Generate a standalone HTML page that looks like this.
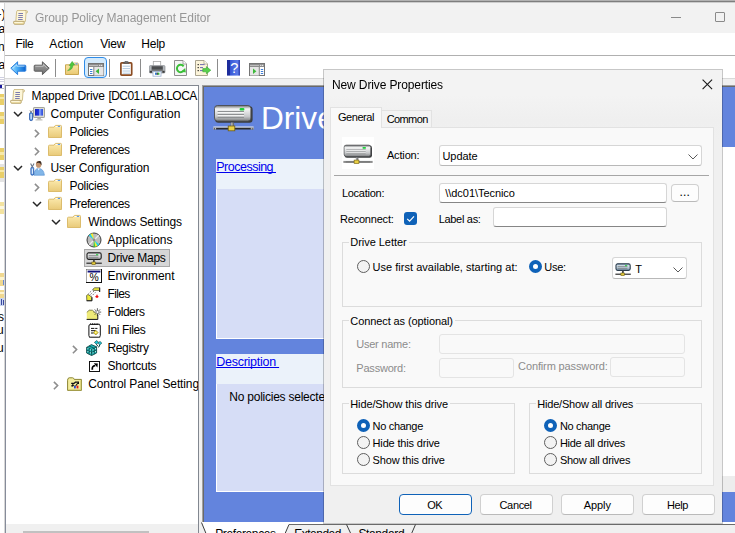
<!DOCTYPE html>
<html>
<head>
<meta charset="utf-8">
<title>Group Policy Management Editor</title>
<style>
html,body{margin:0;padding:0;}
body{width:735px;height:533px;overflow:hidden;position:relative;background:#fff;font-family:"Liberation Sans",sans-serif;font-size:12px;color:#000;}
.abs{position:absolute;}
.t{position:absolute;white-space:nowrap;line-height:1;}
.dis{color:#8c8c8c;}
.inp{position:absolute;background:#fff;border:1px solid #d6d6d6;border-bottom-color:#868686;border-radius:3px;box-sizing:border-box;}
.cmb{border-bottom-color:#b8b8b8;}
.inpd{position:absolute;background:#f9f9f9;border:1px solid #e4e4e4;border-radius:3px;box-sizing:border-box;}
.grp{position:absolute;border:1px solid #dcdcdc;box-sizing:border-box;}
.btn{position:absolute;box-sizing:border-box;border:1px solid #d0d0d0;border-bottom-color:#bababa;border-radius:4px;background:#fdfdfd;}
.rad{position:absolute;width:13px;height:13px;box-sizing:border-box;border:1px solid #5f5f5f;border-radius:50%;background:#f3f3f3;}
.rad.on{border:4px solid #0f62b8;background:#fff;}

</style>
</head>
<body>
<div class="abs" style="left:0px;top:0px;width:735px;height:1px;background:#b2b2b2;"></div>
<div class="abs" style="left:0px;top:1px;width:735px;height:1px;background:#7e7e7e;"></div>
<div class="t" style="left:-2.5px;top:8px;font-size:12px;">-)</div>
<div class="t" style="left:-1.5px;top:23px;font-size:12px;">a</div>
<div class="t" style="left:-2px;top:41px;font-size:12px;">n</div>
<div class="t" style="left:-1.5px;top:59px;font-size:12px;">a</div>
<div class="abs" style="left:0px;top:77px;width:5px;height:1px;background:#cfcfe0;"></div>
<div class="abs" style="left:0px;top:79px;width:5px;height:1px;background:#cfcfe0;"></div>
<div class="abs" style="left:0px;top:81px;width:5px;height:1px;background:#cfcfe0;"></div>
<div class="abs" style="left:0px;top:84px;width:5px;height:5px;background:#fff;border:1px solid #b8b8c8;box-sizing:border-box;"></div>
<div class="abs" style="left:0px;top:85px;width:2px;height:3px;background:#1a1a9a;"></div>
<div class="abs" style="left:0px;top:94px;width:5px;height:11px;background:#e9cf6a;"></div>
<div class="abs" style="left:0px;top:97px;width:5px;height:2px;background:#f7e9a8;"></div>
<div class="abs" style="left:0px;top:112px;width:5px;height:12px;background:#e9cf6a;"></div>
<div class="abs" style="left:0px;top:116px;width:5px;height:3px;background:#f7e9a8;"></div>
<div class="abs" style="left:0px;top:148px;width:5px;height:12px;background:#e9cf6a;"></div>
<div class="abs" style="left:0px;top:152px;width:5px;height:3px;background:#f7e9a8;"></div>
<div class="abs" style="left:0px;top:164px;width:5px;height:18px;background:#e4e4e4;"></div>
<div class="abs" style="left:0px;top:167px;width:5px;height:11px;background:#e9cf6a;"></div>
<div class="abs" style="left:0px;top:170px;width:5px;height:2px;background:#f7e9a8;"></div>
<div class="abs" style="left:0px;top:202px;width:5px;height:12px;background:#f3e3a0;"></div>
<div class="abs" style="left:0px;top:206px;width:5px;height:3px;background:#fdf8e0;"></div>
<div class="abs" style="left:0px;top:273px;width:5px;height:13px;background:#f0d890;"></div>
<div class="abs" style="left:0px;top:277px;width:5px;height:3px;background:#fdf4d0;"></div>
<div class="abs" style="left:3px;top:280px;width:2px;height:5px;background:#6a8ad0;"></div>
<div class="abs" style="left:0px;top:290px;width:5px;height:8px;background:#f0d890;"></div>
<div class="abs" style="left:0px;top:292px;width:5px;height:2px;background:#fdf4d0;"></div>
<div class="abs" style="left:0px;top:298px;width:5px;height:8px;background:#c8d4f0;"></div>
<div class="abs" style="left:1px;top:299px;width:1px;height:6px;background:#3a4aa0;"></div>
<div class="abs" style="left:3px;top:300px;width:1px;height:5px;background:#3a4aa0;"></div>
<div class="t" style="left:-2px;top:311px;font-size:12px;">s</div>
<div class="t" style="left:-3px;top:324px;font-size:12px;">u</div>
<div class="t" style="left:-3px;top:342px;font-size:12px;">u</div>
<div class="abs" style="left:4px;top:2px;width:731px;height:531px;background:#f0f0f0;"></div>
<div class="abs" style="left:4px;top:2px;width:1px;height:531px;background:#d6d6d6;"></div>
<div class="abs" style="left:5px;top:2px;width:730px;height:31px;background:#f2f2f2;"></div>
<div class="abs" style="left:0px;top:2px;width:735px;height:1px;background:#cdcdcd;"></div>
<svg class="abs" style="left:13px;top:9px;" width="16" height="16" viewBox="0 0 16 16"><path d="M4.4 1.5 H13.6 Q15 1.8 14.4 3.6 Q13.8 4.4 13 4 L12.4 12.4 H2.8 L3.6 2.6 Q3.7 1.5 4.8 1.5 Z" fill="#fdf6d8" stroke="#cdbb84" stroke-width="0.9"/><path d="M12.2 1.6 Q13.8 2 13 4" fill="none" stroke="#b9a673" stroke-width="0.8"/><path d="M0.8 12.4 H10.8 Q12 13.8 10.8 15.3 H1.4 Q-0.1 13.8 0.8 12.4 Z" fill="#f4e4aa" stroke="#b5a26c" stroke-width="0.9"/><path d="M1.4 13.4 H9.6" stroke="#fffbe6" stroke-width="0.9"/><path d="M5.4 4.5 H10 M5.3 6.5 H9.9 M5.2 8.5 H9.8 M5.1 10.5 H9.7" stroke="#7c7cb0" stroke-width="1"/></svg>
<div class="t" style="letter-spacing:-0.046px;left:35px;top:12px;font-size:12px;color:#969696;will-change:transform;">Group Policy Management Editor</div>
<div class="abs" style="left:671px;top:17px;width:10px;height:1px;background:#8a8a8a;"></div>
<div class="abs" style="left:715px;top:12px;width:10px;height:10px;border:1px solid #8a8a8a;box-sizing:border-box;border-radius:1px;"></div>
<div class="abs" style="left:5px;top:33px;width:730px;height:22px;background:#fff;"></div>
<div class="t" style="letter-spacing:-0.361px;left:15.5px;top:38px;font-size:12px;">File</div>
<div class="t" style="letter-spacing:0.123px;left:49.3px;top:38px;font-size:12px;">Action</div>
<div class="t" style="letter-spacing:-0.174px;left:100.2px;top:38px;font-size:12px;">View</div>
<div class="t" style="letter-spacing:-0.197px;left:141.2px;top:38px;font-size:12px;">Help</div>
<div class="abs" style="left:5px;top:55px;width:730px;height:1px;background:#b0b0b0;"></div>
<div class="abs" style="left:5px;top:56px;width:730px;height:22px;background:#fff;"></div>
<svg class="abs" style="left:9.5px;top:61px;" width="17" height="15" viewBox="0 0 17 15"><defs><linearGradient id="ba" x1="0" y1="0" x2="1" y2="0"><stop offset="0" stop-color="#a4e0ff"/><stop offset="0.45" stop-color="#45aaf6"/><stop offset="1" stop-color="#0860cc"/></linearGradient></defs><path d="M0.8 7.2 L7.6 0.8 V4.2 H15 Q15.8 4.2 15.8 5 V9.4 Q15.8 10.2 15 10.2 H7.6 V13.6 Z" fill="url(#ba)" stroke="#2a7edc" stroke-width="1" stroke-linejoin="round"/><path d="M3 7.2 L6.8 3.6 V5.2 H14.6" fill="none" stroke="#d4f0ff" stroke-width="0.9" opacity="0.8"/></svg>
<svg class="abs" style="left:32.5px;top:61px;" width="17" height="15" viewBox="0 0 17 15"><defs><linearGradient id="fa" x1="0" y1="0" x2="0" y2="1"><stop offset="0" stop-color="#a2a2a2"/><stop offset="0.5" stop-color="#8a8a8a"/><stop offset="1" stop-color="#6c6c6c"/></linearGradient></defs><path d="M16.2 7.2 L9.4 0.8 V4.2 H2 Q1.2 4.2 1.2 5 V9.4 Q1.2 10.2 2 10.2 H9.4 V13.6 Z" fill="url(#fa)" stroke="#5c5c5c" stroke-width="1" stroke-linejoin="round"/><path d="M2.4 5.3 H10.3 V3.4 L14.2 7.2" fill="none" stroke="#cfcfcf" stroke-width="0.9" opacity="0.8"/></svg>
<div class="abs" style="left:55px;top:59px;width:1px;height:18px;background:#8c8c8c;"></div>
<svg class="abs" style="left:65px;top:61.2px;" width="14" height="15" viewBox="0 0 14 15"><defs><linearGradient id="fu" x1="0" y1="0" x2="0" y2="1"><stop offset="0" stop-color="#f9e6a6"/><stop offset="1" stop-color="#e9c871"/></linearGradient></defs><path d="M0.5 3.8 H13.5 V13.5 H0.5 Z" fill="url(#fu)" stroke="#c9a650"/><path d="M8 3.8 L8.6 2 H13 L13.5 3.8 Z" fill="#fffbe8" stroke="#c9a650" stroke-width="0.8"/><rect x="10.5" y="2.4" width="2" height="1" fill="#4a8ee6"/><path d="M2.6 9.6 Q5.2 8.4 5.8 4.4 L4.2 4.6 L7.2 0.4 L9.6 4 L8 4.1 Q7.6 9.2 2.6 9.6 Z" fill="#4cc93e" stroke="#2e9f2a" stroke-width="0.5"/></svg>
<div class="abs" style="left:84px;top:57px;width:23px;height:21px;background:#d4eafb;border:1.5px solid #2f8ce8;border-radius:4px;box-sizing:border-box;"></div>
<svg class="abs" style="left:88px;top:63px;" width="16" height="13" viewBox="0 0 16 13"><rect x="0.5" y="0.5" width="15" height="12" fill="#fff" stroke="#747474"/><rect x="1" y="1" width="14" height="3" fill="#8c8c8c"/><rect x="1" y="2" width="9" height="0.8" fill="#c8c8c8"/><rect x="11.3" y="1.8" width="1" height="1.2" fill="#fff"/><rect x="13.2" y="1.8" width="1" height="1.2" fill="#fff"/><rect x="6" y="4" width="9.5" height="8.5" fill="#e6e6e6"/><path d="M5.8 4 V12.5" stroke="#747474" stroke-width="0.9"/><rect x="2" y="6" width="2.4" height="1" fill="#3f7fd8"/><rect x="2" y="8" width="2.4" height="1" fill="#3f7fd8"/><rect x="2" y="10" width="2.4" height="1" fill="#3f7fd8"/><path d="M11 5.6 V11 L7.6 8.3 Z" fill="#3cb93a"/></svg>
<div class="abs" style="left:109px;top:59px;width:1px;height:18px;background:#8c8c8c;"></div>
<svg class="abs" style="left:120px;top:60.7px;" width="13" height="15" viewBox="0 0 13 15"><rect x="0.9" y="1.9" width="10.8" height="12.2" rx="0.8" fill="#fff" stroke="#8b4c22" stroke-width="1.7"/><path d="M2.6 5.2 H10 M2.6 7.6 H10 M2.6 10 H10 M2.6 12.2 H10" stroke="#a9c4dc" stroke-width="0.9"/><path d="M3.6 2.4 V1.2 H5 V0.3 H7.6 V1.2 H9 V2.4 Z" fill="#6e6e6e" stroke="#4c4c4c" stroke-width="0.5"/></svg>
<div class="abs" style="left:140px;top:59px;width:1px;height:18px;background:#8c8c8c;"></div>
<svg class="abs" style="left:149px;top:60.5px;" width="17" height="16" viewBox="0 0 17 16"><rect x="4.3" y="0.5" width="7.4" height="5" fill="#fff" stroke="#a8a8a8" stroke-width="0.8"/><rect x="0.4" y="4.6" width="15.6" height="7.4" rx="1" fill="#b4b8bc" stroke="#8a8e92" stroke-width="0.7"/><rect x="2.6" y="5.2" width="11.2" height="3.6" fill="#4c4e50"/><rect x="2.6" y="8.8" width="11.2" height="1.4" fill="#7a7c7e"/><rect x="0.8" y="9.8" width="2.2" height="2" fill="#3c3c3c"/><rect x="13.4" y="9.8" width="2.2" height="2" fill="#3c3c3c"/><rect x="4" y="10.6" width="8" height="4.6" fill="#fff" stroke="#9ab0d0" stroke-width="0.8"/><rect x="6" y="11.6" width="1.6" height="2.2" fill="#2a7ade"/><rect x="7.6" y="11.6" width="1.2" height="2.2" fill="#1a1a1a"/><rect x="8.8" y="11.6" width="1.6" height="2.2" fill="#36b43a"/></svg>
<svg class="abs" style="left:174px;top:60px;" width="13" height="16" viewBox="0 0 13 16"><path d="M0.5 0.5 H9 L12.5 4 V15.5 H0.5 Z" fill="#f5f5f5" stroke="#8e8e8e"/><path d="M9 0.5 V4 H12.5" fill="#fff" stroke="#8e8e8e" stroke-width="0.8"/><path d="M9.9 10.2 A3.7 3.7 0 1 1 9.6 6.3" fill="none" stroke="#3bbf38" stroke-width="2"/><path d="M7.2 11.6 L11.8 12.6 L11.2 8 Z" fill="#3bbf38"/></svg>
<svg class="abs" style="left:195px;top:60px;" width="16" height="16" viewBox="0 0 16 16"><path d="M0.5 0.5 H9 L12.5 4 V15.5 H0.5 Z" fill="#fcf4da" stroke="#aaa490"/><path d="M9 0.5 V4 H12.5" fill="#fffdf0" stroke="#aaa490" stroke-width="0.8"/><rect x="2.6" y="4" width="1.2" height="1.2" fill="#222"/><rect x="2.6" y="7" width="1.2" height="1.2" fill="#222"/><rect x="2.6" y="10" width="1.2" height="1.2" fill="#222"/><path d="M5 4.6 H9.6 M5 7.6 H8 M5 10.6 H8" stroke="#6c6cae" stroke-width="1"/><path d="M7.8 8.6 H11.4 V6.6 L15.8 10.2 L11.4 13.8 V11.8 H7.8 Z" fill="#58d04c" stroke="#34a830" stroke-width="0.6"/></svg>
<div class="abs" style="left:217px;top:59px;width:1px;height:18px;background:#8c8c8c;"></div>
<svg class="abs" style="left:227px;top:60px;" width="13" height="16" viewBox="0 0 13 16"><defs><linearGradient id="hp" x1="0" y1="0" x2="1" y2="0"><stop offset="0" stop-color="#1c2c9c"/><stop offset="0.2" stop-color="#1c2c9c"/><stop offset="0.22" stop-color="#3454d4"/><stop offset="0.8" stop-color="#5a7ae8"/><stop offset="1" stop-color="#2a3cae"/></linearGradient></defs><rect x="0" y="0" width="13" height="15.6" fill="url(#hp)"/><text x="7.4" y="13" font-family="Liberation Sans, sans-serif" font-size="14.5" text-anchor="middle" fill="#fff">?</text></svg>
<svg class="abs" style="left:249px;top:63px;" width="16" height="13" viewBox="0 0 16 13"><rect x="0.5" y="0.5" width="15" height="12" fill="#fff" stroke="#747474"/><rect x="1" y="1" width="14" height="3" fill="#8c8c8c"/><rect x="1" y="2" width="9" height="0.8" fill="#c8c8c8"/><rect x="11.3" y="1.8" width="1" height="1.2" fill="#fff"/><rect x="13.2" y="1.8" width="1" height="1.2" fill="#fff"/><rect x="1" y="4" width="9" height="8.5" fill="#e6e6e6"/><path d="M10.3 4 V12.5" stroke="#747474" stroke-width="0.9"/><rect x="11.8" y="6" width="2.4" height="1" fill="#3f7fd8"/><rect x="11.8" y="8" width="2.4" height="1" fill="#3f7fd8"/><rect x="11.8" y="10" width="2.4" height="1" fill="#3f7fd8"/><path d="M4 5.6 V11 L7.4 8.3 Z" fill="#3cb93a"/></svg>
<div class="abs" style="left:5px;top:78px;width:730px;height:1px;background:#d9d9d9;"></div>
<div class="abs" style="left:5px;top:85px;width:194px;height:448px;background:#fff;border-top:1px solid #828790;border-right:1px solid #828790;border-left:1px solid #868c9a;box-sizing:border-box;"></div>
<div class="abs" style="left:5px;top:86px;width:193px;height:447px;overflow:hidden;"><div class="abs" style="left:-5px;top:-86px;">
<div class="t" style="letter-spacing:-0.553px;left:108.4px;top:90px;font-size:12px;">[DC01.LAB.LOCA</div>
<div class="abs" style="left:84px;top:249px;width:86px;height:18px;background:#d6d6d6;border:1px solid #a8a8a8;box-sizing:border-box;"></div>
<svg class="abs" style="left:10px;top:88px;" width="16" height="16" viewBox="0 0 16 16"><path d="M4.4 1.5 H13.6 Q15 1.8 14.4 3.6 Q13.8 4.4 13 4 L12.4 12.4 H2.8 L3.6 2.6 Q3.7 1.5 4.8 1.5 Z" fill="#fdf6d8" stroke="#cdbb84" stroke-width="0.9"/><path d="M12.2 1.6 Q13.8 2 13 4" fill="none" stroke="#b9a673" stroke-width="0.8"/><path d="M0.8 12.4 H10.8 Q12 13.8 10.8 15.3 H1.4 Q-0.1 13.8 0.8 12.4 Z" fill="#f4e4aa" stroke="#b5a26c" stroke-width="0.9"/><path d="M1.4 13.4 H9.6" stroke="#fffbe6" stroke-width="0.9"/><path d="M5.4 4.5 H10 M5.3 6.5 H9.9 M5.2 8.5 H9.8 M5.1 10.5 H9.7" stroke="#7c7cb0" stroke-width="1"/></svg>
<div class="t" style="letter-spacing:-0.109px;left:31.5px;top:90px;font-size:12px;">Mapped Drive</div>
<svg class="abs" style="left:13px;top:109.4px;" width="10" height="10" viewBox="0 0 10 10"><path d="M1 3 L5 7 L9 3" fill="none" stroke="#262626" stroke-width="1.5"/></svg>
<svg class="abs" style="left:29px;top:106px;" width="16" height="16" viewBox="0 0 16 16"><rect x="4.5" y="1.5" width="11" height="10" rx="0.6" fill="#dcdcd4" stroke="#a4a49c"/><defs><linearGradient id="cs" x1="0" y1="0" x2="1" y2="0"><stop offset="0" stop-color="#1420b8"/><stop offset="0.45" stop-color="#2038e0"/><stop offset="0.6" stop-color="#9ab4f8"/><stop offset="0.8" stop-color="#4a68e8"/><stop offset="1" stop-color="#3450dc"/></linearGradient></defs><rect x="6" y="3" width="8" height="6.6" fill="url(#cs)"/><path d="M8.6 11.8 H11.6 L12.2 13.4 H8 Z" fill="#b0b0aa"/><rect x="6.4" y="13.2" width="7.2" height="1.4" rx="0.6" fill="#c2c2bc"/><rect x="0.6" y="6.6" width="3" height="8" rx="1.3" fill="#5a9ae8" stroke="#2c5cac" stroke-width="0.9"/><rect x="1.6" y="8" width="1" height="5.2" fill="#fff"/><path d="M1 4.4 L2.1 6.4 L3.4 4.4" stroke="#7a8088" stroke-width="1" fill="none"/></svg>
<div class="t" style="letter-spacing:0.127px;left:50.4px;top:108px;font-size:12px;">Computer Configuration</div>
<svg class="abs" style="left:32px;top:128px;" width="10" height="10" viewBox="0 0 10 10"><path d="M2.9 1.9 L6.6 5.55 L2.9 9.2" fill="none" stroke="#8e8e8e" stroke-width="1.6"/></svg>
<svg class="abs" style="left:48px;top:124px;" width="16" height="16" viewBox="0 0 16 16"><defs><linearGradient id="fg" x1="0" y1="0" x2="0" y2="1"><stop offset="0" stop-color="#fcebaf"/><stop offset="1" stop-color="#e9ca79"/></linearGradient></defs><path d="M0.5 4.2 Q0.5 3.2 1.5 3.2 H6 L7.4 1.4 H12.6 Q13.5 1.4 13.5 2.4 V13.5 H0.5 Z" fill="url(#fg)" stroke="#dcbc6c" stroke-width="1"/><path d="M7.2 2.9 L8 1.9 H12.4 Q13 1.9 13 2.9 Z" fill="#fffdf2"/><rect x="9.8" y="1.9" width="2.4" height="1" fill="#4a90ea"/></svg>
<div class="t" style="letter-spacing:-0.295px;left:69.5px;top:126px;font-size:12px;">Policies</div>
<svg class="abs" style="left:32px;top:146px;" width="10" height="10" viewBox="0 0 10 10"><path d="M2.9 1.9 L6.6 5.55 L2.9 9.2" fill="none" stroke="#8e8e8e" stroke-width="1.6"/></svg>
<svg class="abs" style="left:48px;top:142px;" width="16" height="16" viewBox="0 0 16 16"><defs><linearGradient id="fg" x1="0" y1="0" x2="0" y2="1"><stop offset="0" stop-color="#fcebaf"/><stop offset="1" stop-color="#e9ca79"/></linearGradient></defs><path d="M0.5 4.2 Q0.5 3.2 1.5 3.2 H6 L7.4 1.4 H12.6 Q13.5 1.4 13.5 2.4 V13.5 H0.5 Z" fill="url(#fg)" stroke="#dcbc6c" stroke-width="1"/><path d="M7.2 2.9 L8 1.9 H12.4 Q13 1.9 13 2.9 Z" fill="#fffdf2"/><rect x="9.8" y="1.9" width="2.4" height="1" fill="#4a90ea"/></svg>
<div class="t" style="letter-spacing:-0.428px;left:69.5px;top:144px;font-size:12px;">Preferences</div>
<svg class="abs" style="left:13px;top:163.4px;" width="10" height="10" viewBox="0 0 10 10"><path d="M1 3 L5 7 L9 3" fill="none" stroke="#262626" stroke-width="1.5"/></svg>
<svg class="abs" style="left:29px;top:160px;" width="16" height="16" viewBox="0 0 16 16"><ellipse cx="9.6" cy="4.4" rx="2.7" ry="3.4" fill="#c4946e"/><path d="M7.2 3.6 Q8.2 0.4 11 1 Q13 1.6 12.4 5.4 Q11.6 3 9.6 2.8 Q8 2.8 7.2 3.6 Z" fill="#3a2c24"/><path d="M5 15.2 Q5.2 8.6 9.6 8.4 Q14.6 8.6 15.4 15.2 Z" fill="#82b6e8" stroke="#5a94d4" stroke-width="0.7"/><path d="M8.6 8.6 L9.6 10.6 L10.8 8.6 Z" fill="#fff"/><rect x="1.9" y="7.2" width="2.8" height="8" rx="1.3" fill="#5a9ae8" stroke="#2c5cac" stroke-width="0.9"/><rect x="2.8" y="8.6" width="1" height="5.2" fill="#fff"/><path d="M1.6 3.6 L3.3 6.8 L5 3.6" stroke="#6a7686" stroke-width="1.1" fill="none"/></svg>
<div class="t" style="letter-spacing:-0.059px;left:50.4px;top:162px;font-size:12px;">User Configuration</div>
<svg class="abs" style="left:32px;top:182px;" width="10" height="10" viewBox="0 0 10 10"><path d="M2.9 1.9 L6.6 5.55 L2.9 9.2" fill="none" stroke="#8e8e8e" stroke-width="1.6"/></svg>
<svg class="abs" style="left:48px;top:178px;" width="16" height="16" viewBox="0 0 16 16"><defs><linearGradient id="fg" x1="0" y1="0" x2="0" y2="1"><stop offset="0" stop-color="#fcebaf"/><stop offset="1" stop-color="#e9ca79"/></linearGradient></defs><path d="M0.5 4.2 Q0.5 3.2 1.5 3.2 H6 L7.4 1.4 H12.6 Q13.5 1.4 13.5 2.4 V13.5 H0.5 Z" fill="url(#fg)" stroke="#dcbc6c" stroke-width="1"/><path d="M7.2 2.9 L8 1.9 H12.4 Q13 1.9 13 2.9 Z" fill="#fffdf2"/><rect x="9.8" y="1.9" width="2.4" height="1" fill="#4a90ea"/></svg>
<div class="t" style="letter-spacing:-0.295px;left:69.5px;top:180px;font-size:12px;">Policies</div>
<svg class="abs" style="left:32px;top:199.4px;" width="10" height="10" viewBox="0 0 10 10"><path d="M1 3 L5 7 L9 3" fill="none" stroke="#262626" stroke-width="1.5"/></svg>
<svg class="abs" style="left:48px;top:196px;" width="16" height="16" viewBox="0 0 16 16"><defs><linearGradient id="fg" x1="0" y1="0" x2="0" y2="1"><stop offset="0" stop-color="#fcebaf"/><stop offset="1" stop-color="#e9ca79"/></linearGradient></defs><path d="M0.5 4.2 Q0.5 3.2 1.5 3.2 H6 L7.4 1.4 H12.6 Q13.5 1.4 13.5 2.4 V13.5 H0.5 Z" fill="url(#fg)" stroke="#dcbc6c" stroke-width="1"/><path d="M7.2 2.9 L8 1.9 H12.4 Q13 1.9 13 2.9 Z" fill="#fffdf2"/><rect x="9.8" y="1.9" width="2.4" height="1" fill="#4a90ea"/></svg>
<div class="t" style="letter-spacing:-0.428px;left:69.5px;top:198px;font-size:12px;">Preferences</div>
<svg class="abs" style="left:51px;top:217.4px;" width="10" height="10" viewBox="0 0 10 10"><path d="M1 3 L5 7 L9 3" fill="none" stroke="#262626" stroke-width="1.5"/></svg>
<svg class="abs" style="left:67px;top:214px;" width="16" height="16" viewBox="0 0 16 16"><defs><linearGradient id="fg" x1="0" y1="0" x2="0" y2="1"><stop offset="0" stop-color="#fcebaf"/><stop offset="1" stop-color="#e9ca79"/></linearGradient></defs><path d="M0.5 4.2 Q0.5 3.2 1.5 3.2 H6 L7.4 1.4 H12.6 Q13.5 1.4 13.5 2.4 V13.5 H0.5 Z" fill="url(#fg)" stroke="#dcbc6c" stroke-width="1"/><path d="M7.2 2.9 L8 1.9 H12.4 Q13 1.9 13 2.9 Z" fill="#fffdf2"/><rect x="9.8" y="1.9" width="2.4" height="1" fill="#4a90ea"/></svg>
<div class="t" style="letter-spacing:-0.111px;left:88.3px;top:216px;font-size:12px;">Windows Settings</div>
<svg class="abs" style="left:86px;top:232px;" width="16" height="16" viewBox="0 0 16 16"><circle cx="8" cy="8" r="7" fill="#bcbcbc" stroke="#3c3c3c" stroke-width="1"/><path d="M8 8 L2.6 3.4 L4.6 1.9 Z" fill="#22d4e8"/><path d="M8 8 L4.6 1.9 L6.8 1.2 Z" fill="#f0ee30"/><path d="M8 8 L13.4 12.6 L11.4 14.1 Z" fill="#22d4e8"/><path d="M8 8 L11.4 14.1 L9.2 14.8 Z" fill="#f0ee30"/><path d="M8 8 L9.2 14.8 L7.6 14.9 Z" fill="#30d030"/><path d="M3.2 12.8 L12.8 3.2" stroke="#f4f4f4" stroke-width="1.3" opacity="0.85"/><circle cx="8" cy="8" r="1.4" fill="#8c8c8c"/></svg>
<div class="t" style="letter-spacing:0.032px;left:107.5px;top:234px;font-size:12px;">Applications</div>
<svg class="abs" style="left:86px;top:250px;" width="16" height="16" viewBox="0 0 16 16"><defs><linearGradient id="dg" x1="0" y1="0" x2="0" y2="1"><stop offset="0" stop-color="#8c8e90"/><stop offset="0.3" stop-color="#eceded"/><stop offset="1" stop-color="#a8aaac"/></linearGradient></defs><rect x="1" y="2.8" width="14.2" height="6.6" rx="1.6" fill="url(#dg)" stroke="#1e1e1e" stroke-width="1.1"/><path d="M2.6 5.6 H12.4 M2.6 7.4 H12.4" stroke="#7e8082" stroke-width="0.8"/><rect x="10" y="4.2" width="2.2" height="1" fill="#1fd03a"/><rect x="7" y="9.8" width="1.8" height="2.6" fill="#4a4c4e"/><path d="M0.4 13.2 H15.8" stroke="#1c1c1c" stroke-width="1.1"/><rect x="5.9" y="12" width="3.4" height="2.6" fill="#e4cc3c" stroke="#6e5c10" stroke-width="0.6"/></svg>
<div class="t" style="letter-spacing:-0.259px;left:107.5px;top:252px;font-size:12px;">Drive Maps</div>
<svg class="abs" style="left:86px;top:268px;" width="16" height="16" viewBox="0 0 16 16"><rect x="0.5" y="1.5" width="15" height="13" fill="#fff" stroke="#111"/><path d="M0.5 14 V1.5 H15" fill="none" stroke="#a8a8a8" stroke-width="1"/><rect x="1.6" y="2.6" width="12.8" height="1.9" fill="#10107c"/><text x="8.1" y="13.1" font-family="Liberation Sans, sans-serif" font-size="10.4" text-anchor="middle" fill="#000">%</text></svg>
<div class="t" style="letter-spacing:-0.034px;left:107.5px;top:270px;font-size:12px;">Environment</div>
<svg class="abs" style="left:86px;top:286px;" width="16" height="16" viewBox="0 0 16 16"><path d="M7 3.2 L8.4 1.8 H13.6 V5.6 L12.6 4.4 H7.4 Z" fill="#ecea3c" stroke="#222" stroke-width="0.6"/><path d="M13.7 1.6 V6" stroke="#111" stroke-width="0.9"/><path d="M0.6 9.6 Q1.6 8 3.4 9 L5.6 11.4 V14.6 H0.8 Z" fill="#ecea3c" stroke="#222" stroke-width="0.6"/><path d="M0.6 14.8 H6 V11.2" fill="none" stroke="#111" stroke-width="0.9"/><path d="M2.4 7.8 L6.6 3.8 M3.6 9.4 L8 5 M5.2 10.6 L9.4 6.4" stroke="#444" stroke-width="0.8" stroke-dasharray="1.2 1.2" fill="none"/><path d="M11 8.8 V12 M9.4 10.6 H12.4" stroke="#f01010" stroke-width="1.3"/></svg>
<div class="t" style="letter-spacing:-0.669px;left:107.5px;top:288px;font-size:12px;">Files</div>
<svg class="abs" style="left:86px;top:304px;" width="16" height="16" viewBox="0 0 16 16"><path d="M0.8 15.2 V8.4 L3.2 6.2 H6.4 L11.6 10.4 V15.2 Z" fill="#eeea78" stroke="none"/><path d="M0.8 8.4 L3.2 6.2 H6.4 L8 7.6" fill="none" stroke="#55551a" stroke-width="0.7"/><path d="M0.6 15.4 H11.8 V10.4" fill="none" stroke="#111" stroke-width="1"/><path d="M11.4 4.2 V12 M7.6 8.1 H15.2 M8.7 5.4 L14.1 10.8 M14.1 5.4 L8.7 10.8" stroke="#222" stroke-width="0.7"/><circle cx="11.4" cy="8.1" r="1.1" fill="#fff"/></svg>
<div class="t" style="letter-spacing:-0.431px;left:107.5px;top:306px;font-size:12px;">Folders</div>
<svg class="abs" style="left:86px;top:322px;" width="16" height="16" viewBox="0 0 16 16"><rect x="2.9" y="2.4" width="11.4" height="12.8" rx="1.6" fill="#fff" stroke="#111" stroke-width="1"/><path d="M3 15.6 H14.2" stroke="#555" stroke-width="0.8"/><path d="M4.2 2 H13.4" stroke="#111" stroke-width="1.4" stroke-dasharray="0.9 0.9"/><path d="M5 6.4 H8.4 M9.2 6.4 H11.4 M5 8.7 H9.4 M5 11 H7.6" stroke="#111" stroke-width="1"/><path d="M9.8 8.2 L12.2 10.6 L9.8 13 L7.4 10.6 Z" fill="#ecd82c" stroke="#6a5a10" stroke-width="0.5"/><circle cx="9.8" cy="10.6" r="0.8" fill="#fff8c0"/></svg>
<div class="t" style="letter-spacing:-0.383px;left:107.5px;top:324px;font-size:12px;">Ini Files</div>
<svg class="abs" style="left:70px;top:344px;" width="10" height="10" viewBox="0 0 10 10"><path d="M2.9 1.9 L6.6 5.55 L2.9 9.2" fill="none" stroke="#8e8e8e" stroke-width="1.6"/></svg>
<svg class="abs" style="left:86px;top:340px;" width="16" height="16" viewBox="0 0 16 16"><path d="M0.6 7.4 L5.4 4.6 L10.6 6.8 V13 L5.6 15.6 L0.6 13 Z" fill="#19b4b4" stroke="#0a3c3c" stroke-width="0.8"/><path d="M0.6 7.4 L5.6 9.6 L10.6 6.8 M5.6 9.6 V15.6 M0.6 10.2 L5.6 12.6 L10.6 9.8 M3 8.4 V14.2 M8.2 8.2 V14.2 M3 6 L8.2 8.2" stroke="#0a3c3c" stroke-width="0.7" fill="none"/><path d="M1.6 8.6 H2.4 M4 9.8 H4.8 M6.6 9.8 H7.4 M9 8.6 H9.8 M1.6 11.6 H2.4 M4 12.8 H4.8 M6.6 12.8 H7.4 M9 11.6 H9.8" stroke="#e8ffff" stroke-width="1"/><path d="M8.4 2.4 L10.6 0.6 L12.6 2.2 L10.4 4.2 Z" fill="#22c8d8" stroke="#0a3c3c" stroke-width="0.6"/><path d="M12 3.2 L14 1.4 L15.8 3 L13.8 5 Z" fill="#22c8d8" stroke="#0a3c3c" stroke-width="0.6"/><path d="M10.4 4.2 L12 6.4 M13.8 5 L12.6 7.4" stroke="#0a3c3c" stroke-width="1"/></svg>
<div class="t" style="letter-spacing:-0.364px;left:107.5px;top:342px;font-size:12px;">Registry</div>
<svg class="abs" style="left:86px;top:358px;" width="16" height="16" viewBox="0 0 16 16"><rect x="3.5" y="3.5" width="10" height="10" fill="#fff" stroke="#111"/><path d="M6.4 11.8 Q5.6 8 9.2 7.6" stroke="#000" stroke-width="1.7" fill="none"/><path d="M7.8 5.2 L11.8 5.4 L11.4 9.4 Z" fill="#000"/></svg>
<div class="t" style="letter-spacing:-0.211px;left:107.5px;top:360px;font-size:12px;">Shortcuts</div>
<svg class="abs" style="left:51px;top:380px;" width="10" height="10" viewBox="0 0 10 10"><path d="M2.9 1.9 L6.6 5.55 L2.9 9.2" fill="none" stroke="#8e8e8e" stroke-width="1.6"/></svg>
<svg class="abs" style="left:67px;top:376px;" width="16" height="16" viewBox="0 0 16 16"><path d="M0.6 4.2 Q0.6 2 2.2 1.8 H5.6 Q6.8 1.8 7.2 3.4 H14.4 V14.4 H0.6 Z" fill="#f4ee9e" stroke="#8a8432" stroke-width="1"/><path d="M1.4 13.8 H13.8 V4.4" fill="none" stroke="#d4cc6c" stroke-width="0.8"/><path d="M4.2 7.4 H7 L8.4 6.2 H11.4 V8" stroke="#111" stroke-width="1.2" fill="none"/><path d="M5.4 8 L8 11 M10.8 7 L8.6 10" stroke="#111" stroke-width="1.1"/><rect x="7" y="10" width="1.8" height="2.4" fill="#2848d8"/><rect x="9.6" y="9.6" width="1.8" height="2.8" fill="#e01818"/><rect x="4.4" y="9" width="1.6" height="1.6" fill="#111"/></svg>
<div class="t" style="letter-spacing:-0.132px;left:88.3px;top:378px;font-size:12px;">Control Panel Settings</div>
</div></div>
<div class="abs" style="left:6px;top:524px;width:192px;height:9px;background:#f0f0f0;"></div>
<div class="abs" style="left:23px;top:531px;width:126px;height:2px;background:#c1c1c1;"></div>
<div class="abs" style="left:202px;top:85px;width:533px;height:438px;background:#6384dd;border-top:1px solid #a0a0a0;border-left:1px solid #a0a0a0;box-sizing:border-box;"></div>
<div class="abs" style="left:203px;top:86px;width:532px;height:437px;border-top:1px solid #696969;border-left:1px solid #696969;box-sizing:border-box;"></div>
<svg class="abs" style="left:213px;top:100px;" width="41" height="34" viewBox="0 0 41 34"><defs><linearGradient id="bd" x1="0" y1="0" x2="0" y2="1"><stop offset="0" stop-color="#6c6e70"/><stop offset="0.22" stop-color="#f4f5f5"/><stop offset="0.7" stop-color="#c6c8ca"/><stop offset="1" stop-color="#7c7e80"/></linearGradient></defs><rect x="2.2" y="6.2" width="37.4" height="16.6" rx="3.2" fill="#3a3c3e"/><rect x="1.5" y="5.5" width="36.4" height="15.6" rx="3" fill="url(#bd)" stroke="#4c4e50" stroke-width="0.9"/><path d="M4.6 11.5 H31 M4.6 14.5 H31 M4.6 17.5 H31" stroke="#8e9092" stroke-width="1"/><path d="M4.6 12.5 H31 M4.6 15.5 H31" stroke="#fafafa" stroke-width="0.8"/><rect x="26.6" y="8" width="4.8" height="2.6" rx="1" fill="#1ed03c"/><rect x="17.6" y="22.6" width="3.4" height="4.6" fill="#6c6e70"/><rect x="18.4" y="22.6" width="1" height="4.6" fill="#d0d2d4"/><path d="M0.4 27.2 H40.6" stroke="#e8eaec" stroke-width="1.2"/><path d="M0.4 28.6 H40.6" stroke="#2a2a2a" stroke-width="1.6"/><path d="M0.4 28.6 H3.2 M37.8 28.6 H40.6" stroke="#e0e0e0" stroke-width="1.6" stroke-dasharray="0.9 0.9"/><rect x="15.2" y="26" width="6.6" height="4.8" fill="#ead044" stroke="#6e5c14" stroke-width="0.8"/></svg>
<div class="t" style="left:261px;top:103px;font-size:31.6px;color:#fff;">Drive</div>
<div class="abs" style="left:216px;top:159px;width:200px;height:30px;background:#ebf2fa;"></div>
<div class="abs" style="left:216px;top:189px;width:200px;height:150px;background:#fff;"></div>
<div class="abs" style="left:217px;top:189px;width:200px;height:149px;background:#d6ddf6;"></div>
<div class="t" style="letter-spacing:-0.510px;left:216.3px;top:161px;font-size:12.5px;color:#0000ee;text-decoration:underline;text-decoration-skip-ink:none;">Processing&nbsp;</div>
<div class="abs" style="left:216px;top:354px;width:200px;height:30px;background:#ebf2fa;"></div>
<div class="abs" style="left:216px;top:384px;width:200px;height:108px;background:#fff;"></div>
<div class="abs" style="left:217px;top:384px;width:200px;height:107px;background:#d6ddf6;"></div>
<div class="t" style="letter-spacing:-0.258px;left:216.2px;top:356px;font-size:12.5px;color:#0000ee;text-decoration:underline;text-decoration-skip-ink:none;">Description&nbsp;</div>
<div class="t" style="letter-spacing:-0.237px;left:229.3px;top:391px;font-size:12px;">No policies selected</div>
<div class="abs" style="left:204px;top:522px;width:531px;height:2px;background:#fff;"></div>
<div class="abs" style="left:199px;top:524px;width:536px;height:9px;background:#f0f0f0;"></div>
<svg class="abs" style="left:199px;top:522px;" width="536" height="11" viewBox="0 0 536 11"><path d="M2.5 0 L7 11 H86.5 L90.5 2 V0 Z" fill="#fff"/><path d="M90 2.5 H536" stroke="#6a6a6a" stroke-width="1" fill="none"/><path d="M2.5 0.5 L6.8 11 M86.3 11 L90 2.5 M147.5 2.5 L151.5 11 M212.8 11 L216.5 2.5" stroke="#3c3c3c" stroke-width="1" fill="none"/></svg>
<div class="t" style="letter-spacing:-0.382px;left:215.2px;top:528px;font-size:12px;">Preferences</div>
<div class="t" style="letter-spacing:-0.490px;left:294.2px;top:528px;font-size:12px;">Extended</div>
<div class="t" style="letter-spacing:-0.363px;left:358.4px;top:528px;font-size:12px;">Standard</div>
<div class="abs" style="left:722px;top:147px;width:13px;height:329px;background:#fff;"></div>
<div class="abs" style="left:722px;top:476px;width:13px;height:16px;background:#ededed;"></div>
<div class="abs" style="left:323px;top:69px;width:400px;height:455px;background:linear-gradient(#f3f3f3 0px,#f3f3f3 25px,#efefef 50px,#f0f0f0 70px);background-clip:padding-box;border:1px solid rgba(0,0,0,0.22);box-sizing:border-box;"></div>
<div class="t" style="letter-spacing:-0.119px;left:332.4px;top:79px;font-size:12px;will-change:transform;">New Drive Properties</div>
<svg class="abs" style="left:701.5px;top:78.5px;" width="11" height="11" viewBox="0 0 11 11"><path d="M0.6 0.6 L10.1 10.1 M10.1 0.6 L0.6 10.1" stroke="#1a1a1a" stroke-width="1.1" fill="none"/></svg>
<div class="abs" style="left:330px;top:127px;width:384px;height:359px;background:#f9f9f9;border:1px solid #e2e2e2;box-sizing:border-box;"></div>
<div class="abs" style="left:330px;top:107px;width:52px;height:21px;background:#f9f9f9;border:1px solid #e2e2e2;border-bottom:none;box-sizing:border-box;"></div>
<div class="abs" style="left:382px;top:110px;width:50px;height:17px;background:#f3f3f3;border:1px solid #e2e2e2;border-bottom:none;border-left:none;box-sizing:border-box;"></div>
<div class="t" style="letter-spacing:-0.449px;left:338px;top:112px;font-size:11px;">General</div>
<div class="t" style="letter-spacing:-0.604px;left:386.7px;top:114px;font-size:11px;">Common</div>
<div class="abs" style="left:342px;top:137px;width:32px;height:32px;background:#fff;"></div>
<svg class="abs" style="left:343px;top:141px;" width="30" height="25" viewBox="0 0 41 34"><defs><linearGradient id="bd2" x1="0" y1="0" x2="0" y2="1"><stop offset="0" stop-color="#6c6e70"/><stop offset="0.22" stop-color="#f4f5f5"/><stop offset="0.7" stop-color="#c6c8ca"/><stop offset="1" stop-color="#7c7e80"/></linearGradient></defs><rect x="2.2" y="6.2" width="37.4" height="16.6" rx="3.2" fill="#3a3c3e"/><rect x="1.5" y="5.5" width="36.4" height="15.6" rx="3" fill="url(#bd2)" stroke="#4c4e50" stroke-width="0.9"/><path d="M4.6 11.5 H31 M4.6 14.5 H31 M4.6 17.5 H31" stroke="#8e9092" stroke-width="1"/><path d="M4.6 12.5 H31 M4.6 15.5 H31" stroke="#fafafa" stroke-width="0.8"/><rect x="26.6" y="8" width="4.8" height="2.6" rx="1" fill="#1ed03c"/><rect x="17.6" y="22.6" width="3.4" height="4.6" fill="#6c6e70"/><rect x="18.4" y="22.6" width="1" height="4.6" fill="#d0d2d4"/><path d="M0.4 27.2 H40.6" stroke="#e8eaec" stroke-width="1.2"/><path d="M0.4 28.6 H40.6" stroke="#2a2a2a" stroke-width="1.6"/><path d="M0.4 28.6 H3.2 M37.8 28.6 H40.6" stroke="#e0e0e0" stroke-width="1.6" stroke-dasharray="0.9 0.9"/><rect x="15.2" y="26" width="6.6" height="4.8" fill="#ead044" stroke="#6e5c14" stroke-width="0.8"/></svg>
<div class="t" style="letter-spacing:-0.149px;left:386.9px;top:150px;font-size:11px;">Action:</div>
<div class="inp cmb" style="left:439px;top:145px;width:263px;height:21px;"></div>
<div class="t" style="letter-spacing:-0.081px;left:442.5px;top:151px;font-size:11px;">Update</div>
<svg class="abs" style="left:688px;top:153.5px;" width="10" height="6" viewBox="0 0 10 6"><path d="M0.5 0.5 L5 5 L9.5 0.5" stroke="#5a5a5a" stroke-width="1" fill="none"/></svg>
<div class="abs" style="left:334px;top:175px;width:375px;height:1px;background:#a6a6a6;"></div>
<div class="t" style="letter-spacing:-0.251px;left:341.9px;top:188px;font-size:11px;">Location:</div>
<div class="inp" style="left:439px;top:183px;width:228px;height:20px;"></div>
<div class="t" style="letter-spacing:-0.052px;left:445.3px;top:188px;font-size:11px;">\\dc01\Tecnico</div>
<div class="btn" style="left:671px;top:184px;width:28px;height:18px;"></div>
<div class="t" style="letter-spacing:0.161px;left:679.6px;top:186px;font-size:12px;">...</div>
<div class="t" style="letter-spacing:-0.206px;left:340px;top:214px;font-size:11px;">Reconnect:</div>
<div class="abs" style="left:404px;top:212px;width:13px;height:13px;background:#0f62b8;border-radius:3px;"></div>
<svg class="abs" style="left:404px;top:212px;" width="13" height="13" viewBox="0 0 13 13"><path d="M3.2 6.8 L5.6 9.2 L10 4.4" stroke="#fff" stroke-width="1.2" fill="none"/></svg>
<div class="t" style="letter-spacing:-0.306px;left:438.7px;top:214px;font-size:11px;">Label as:</div>
<div class="inp" style="left:493px;top:207px;width:174px;height:20px;"></div>
<div class="grp" style="left:342px;top:242px;width:360px;height:65px;"></div>
<div class="abs" style="left:348.8px;top:242px;width:60.3px;height:1px;background:#f9f9f9;"></div>
<div class="t" style="letter-spacing:-0.047px;left:350.3px;top:237px;font-size:11px;">Drive Letter</div>
<div class="rad" style="left:357px;top:260px;"></div>
<div class="t" style="letter-spacing:0.021px;left:372.6px;top:262px;font-size:11px;">Use first available, starting at:</div>
<div class="rad on" style="left:529px;top:260px;"></div>
<div class="t" style="letter-spacing:-0.256px;left:544.3px;top:262px;font-size:11px;">Use:</div>
<div class="inp cmb" style="left:612px;top:257px;width:75px;height:22px;"></div>
<svg class="abs" style="left:615px;top:260.5px;" width="16" height="16" viewBox="0 0 16 16"><defs><linearGradient id="dg2" x1="0" y1="0" x2="0" y2="1"><stop offset="0" stop-color="#5c7690"/><stop offset="0.3" stop-color="#dce8f0"/><stop offset="1" stop-color="#7c98b0"/></linearGradient></defs><rect x="1" y="2.8" width="14.2" height="6.6" rx="1.6" fill="url(#dg2)" stroke="#2c3c4c" stroke-width="1.1"/><path d="M2.6 5.6 H12.4 M2.6 7.4 H12.4" stroke="#7e8082" stroke-width="0.8"/><rect x="10" y="4.2" width="2.2" height="1" fill="#1fd03a"/><rect x="7" y="9.8" width="1.8" height="2.6" fill="#4a4c4e"/><path d="M0.4 13.2 H15.8" stroke="#1c1c1c" stroke-width="1.1"/><rect x="5.9" y="12" width="3.4" height="2.6" fill="#e4cc3c" stroke="#6e5c10" stroke-width="0.6"/></svg>
<div class="t" style="left:635.3px;top:264px;font-size:11px;">T</div>
<svg class="abs" style="left:673px;top:266.5px;" width="10" height="6" viewBox="0 0 10 6"><path d="M0.5 0.5 L5 5 L9.5 0.5" stroke="#5a5a5a" stroke-width="1" fill="none"/></svg>
<div class="grp" style="left:342px;top:320px;width:360px;height:68px;"></div>
<div class="abs" style="left:348.8px;top:320px;width:106.6px;height:1px;background:#f9f9f9;"></div>
<div class="t" style="letter-spacing:-0.093px;left:350.3px;top:316px;font-size:11px;">Connect as (optional)</div>
<div class="t" style="letter-spacing:-0.246px;left:356.3px;top:339px;font-size:11px;color:#8c8c8c;">User name:</div>
<div class="inpd" style="left:439px;top:334px;width:246px;height:20px;"></div>
<div class="t" style="letter-spacing:-0.207px;left:356.3px;top:363px;font-size:11px;color:#8c8c8c;">Password:</div>
<div class="inpd" style="left:439px;top:358px;width:75px;height:20px;"></div>
<div class="t" style="letter-spacing:-0.130px;left:518.1px;top:361px;font-size:11px;color:#8c8c8c;">Confirm password:</div>
<div class="inpd" style="left:610px;top:357px;width:75px;height:20px;"></div>
<div class="grp" style="left:342px;top:403px;width:173px;height:71px;"></div>
<div class="abs" style="left:348.8px;top:403px;width:101.7px;height:1px;background:#f9f9f9;"></div>
<div class="t" style="letter-spacing:-0.129px;left:350.3px;top:399px;font-size:11px;">Hide/Show this drive</div>
<div class="rad on" style="left:357px;top:419px;"></div>
<div class="t" style="letter-spacing:-0.313px;left:372.6px;top:421px;font-size:11px;">No change</div>
<div class="rad" style="left:357px;top:436px;"></div>
<div class="t" style="letter-spacing:-0.167px;left:372.6px;top:438px;font-size:11px;">Hide this drive</div>
<div class="rad" style="left:357px;top:453px;"></div>
<div class="t" style="letter-spacing:-0.166px;left:372.6px;top:455px;font-size:11px;">Show this drive</div>
<div class="grp" style="left:529px;top:403px;width:173px;height:71px;"></div>
<div class="abs" style="left:535.7px;top:403px;width:100px;height:1px;background:#f9f9f9;"></div>
<div class="t" style="letter-spacing:-0.183px;left:537.2px;top:399px;font-size:11px;">Hide/Show all drives</div>
<div class="rad on" style="left:544px;top:419px;"></div>
<div class="t" style="letter-spacing:-0.313px;left:559.9px;top:421px;font-size:11px;">No change</div>
<div class="rad" style="left:544px;top:436px;"></div>
<div class="t" style="letter-spacing:-0.260px;left:559.9px;top:438px;font-size:11px;">Hide all drives</div>
<div class="rad" style="left:544px;top:453px;"></div>
<div class="t" style="letter-spacing:-0.246px;left:559.9px;top:455px;font-size:11px;">Show all drives</div>
<div class="btn" style="left:399px;top:494px;width:73px;height:21px;border-color:#0f62b8;"></div>
<div class="btn" style="left:480px;top:494px;width:73px;height:21px;"></div>
<div class="btn" style="left:561px;top:494px;width:73px;height:21px;"></div>
<div class="btn" style="left:642px;top:494px;width:73px;height:21px;"></div>
<div class="t" style="letter-spacing:-0.703px;left:427.3px;top:500px;font-size:11px;">OK</div>
<div class="t" style="letter-spacing:-0.342px;left:499.5px;top:500px;font-size:11px;">Cancel</div>
<div class="t" style="letter-spacing:-0.106px;left:583.8px;top:500px;font-size:11px;">Apply</div>
<div class="t" style="letter-spacing:-0.406px;left:667px;top:500px;font-size:11px;">Help</div>
</body>
</html>
